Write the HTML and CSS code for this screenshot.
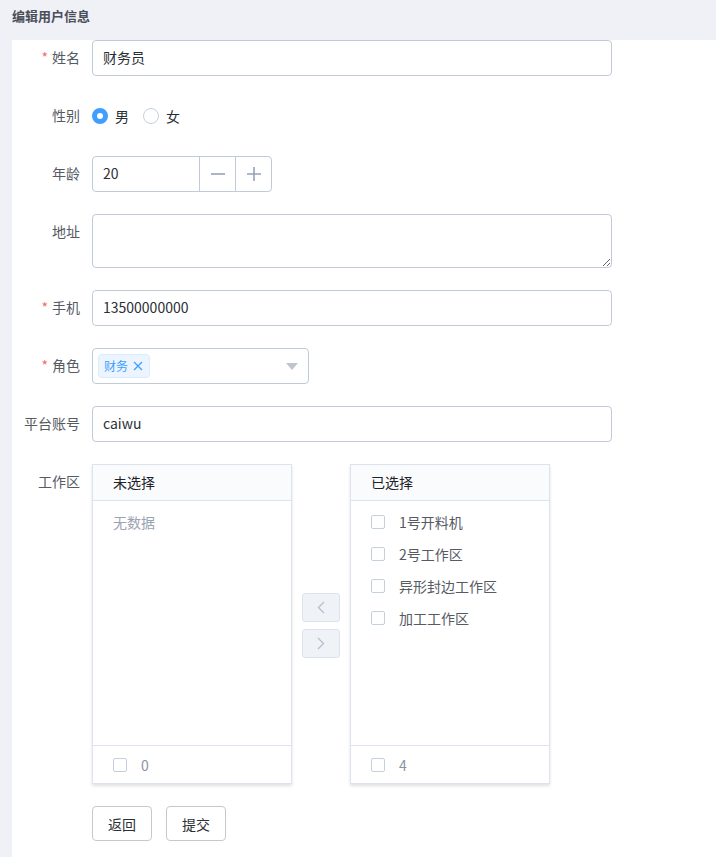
FILE: index.html
```html
<!DOCTYPE html>
<html lang="zh-CN">
<head>
<meta charset="utf-8">
<title>编辑用户信息</title>
<link rel="stylesheet" href="styles.css">
</head>
<body>
<div class="page">
  <div class="title">编辑用户信息</div>
  <div class="card">
    <form class="form">
      <div class="item">
        <label class="label req">姓名</label>
        <div class="ctrl"><div class="input">财务员</div></div>
      </div>
      <div class="item">
        <label class="label">性别</label>
        <div class="ctrl radios">
          <span class="radio on"><i class="dot"></i>男</span>
          <span class="radio"><i class="dot"></i>女</span>
        </div>
      </div>
      <div class="item">
        <label class="label">年龄</label>
        <div class="ctrl">
          <div class="number">
            <span class="num-val">20</span>
            <span class="num-btn"><svg width="14" height="14" viewBox="0 0 14 14"><path d="M0 7H14" stroke="#96a3ba" stroke-width="1.6"/></svg></span>
            <span class="num-btn"><svg width="14" height="14" viewBox="0 0 14 14"><path d="M0 7H14M7 0V14" stroke="#96a3ba" stroke-width="1.6"/></svg></span>
          </div>
        </div>
      </div>
      <div class="item">
        <label class="label">地址</label>
        <div class="ctrl"><textarea class="textarea"></textarea></div>
      </div>
      <div class="item">
        <label class="label req">手机</label>
        <div class="ctrl"><div class="input">13500000000</div></div>
      </div>
      <div class="item">
        <label class="label req">角色</label>
        <div class="ctrl">
          <div class="select">
            <span class="tag">财务<svg class="tag-x" width="10" height="10" viewBox="0 0 10 10"><path d="M1 1L9 9M9 1L1 9" stroke="#409eff" stroke-width="1.3"/></svg></span>
            <svg class="caret" width="12" height="7" viewBox="0 0 12 7"><path d="M0 0H12L6 7Z" fill="#c0c4cc"/></svg>
          </div>
        </div>
      </div>
      <div class="item">
        <label class="label">平台账号</label>
        <div class="ctrl"><div class="input">caiwu</div></div>
      </div>
      <div class="item">
        <label class="label">工作区</label>
        <div class="ctrl">
          <div class="transfer">
            <div class="panel">
              <div class="panel-head">未选择</div>
              <div class="panel-body"><div class="empty">无数据</div></div>
              <div class="panel-foot"><i class="cb"></i><span class="count">0</span></div>
            </div>
            <div class="t-btns">
              <span class="t-btn"><svg width="8" height="13" viewBox="0 0 8 13"><path d="M7 1L1.5 6.5L7 12" fill="none" stroke="#b4bfd0" stroke-width="1.3"/></svg></span>
              <span class="t-btn"><svg width="8" height="13" viewBox="0 0 8 13"><path d="M1 1L6.5 6.5L1 12" fill="none" stroke="#b4bfd0" stroke-width="1.3"/></svg></span>
            </div>
            <div class="panel">
              <div class="panel-head">已选择</div>
              <div class="panel-body">
                <div class="opt"><i class="cb"></i>1号开料机</div>
                <div class="opt"><i class="cb"></i>2号工作区</div>
                <div class="opt"><i class="cb"></i>异形封边工作区</div>
                <div class="opt"><i class="cb"></i>加工工作区</div>
              </div>
              <div class="panel-foot"><i class="cb"></i><span class="count">4</span></div>
            </div>
          </div>
        </div>
      </div>
      <div class="item">
        <span class="label"></span>
        <div class="ctrl actions">
          <button type="button" class="btn">返回</button>
          <button type="button" class="btn">提交</button>
        </div>
      </div>
    </form>
  </div>
</div>
</body>
</html>
```
FILE: styles.css
```css
* { box-sizing: border-box; }
html, body { margin: 0; padding: 0; }
body {
  width: 716px;
  height: 857px;
  overflow: hidden;
  background: #f0f1f6;
  font-family: "Noto Sans CJK SC", "Noto Sans", sans-serif;
  font-size: 14px;
  color: #333;
}
.page { display: flex; flex-direction: column; height: 857px; }
.title {
  height: 40px;
  padding: 6px 0 0 12px;
  font-size: 13px;
  font-weight: 700;
  color: #4a4f5a;
  line-height: 20px;
}
.card {
  flex: 1;
  margin-left: 12px;
  background: #fff;
}
.form { display: flex; flex-direction: column; gap: 22px; }
.item { display: flex; align-items: flex-start; }
.label {
  width: 80px;
  flex: none;
  padding-right: 12px;
  text-align: right;
  line-height: 34px;
  color: #555a63;
}
.label.req::before { content: "*"; color: #f56c6c; margin-right: 4px; }
.ctrl { flex: none; }
.input {
  width: 520px;
  height: 36px;
  border: 1px solid #c2cad8;
  border-radius: 4px;
  padding: 0 10px;
  line-height: 32px;
  color: #2b2f36;
}
.radios { display: flex; align-items: center; height: 36px; padding-bottom: 1px; }
.radio { display: flex; align-items: center; margin-right: 14px; color: #2b2f36; }
.radio .dot {
  width: 16px; height: 16px;
  border: 1px solid #c6cfdd;
  border-radius: 50%;
  margin-right: 7px;
  background: #fff;
}
.radio.on .dot { border: 5px solid #409eff; }
.number {
  display: flex;
  width: 180px;
  height: 36px;
  border: 1px solid #c2cad8;
  border-radius: 4px;
}
.num-val { flex: 1; padding-left: 10px; line-height: 32px; color: #2b2f36; }
.num-btn {
  width: 36px;
  border-left: 1px solid #c2cad8;
  display: flex; align-items: center; justify-content: center;
}
.textarea {
  display: block;
  width: 520px;
  height: 54px;
  border: 1px solid #c2cad8;
  border-radius: 4px;
  resize: vertical;
  font: inherit;
  margin: 0;
}
.select {
  width: 217px;
  height: 36px;
  border: 1px solid #c2cad8;
  border-radius: 4px;
  display: flex;
  align-items: center;
  padding: 0 10px 0 5px;
}
.tag {
  display: flex; align-items: center;
  height: 24px;
  padding: 0 6px 1px 5px;
  background: #ecf5ff;
  border: 1px solid #d9ecff;
  border-radius: 4px;
  color: #409eff;
  font-size: 12px;
}
.tag-x { margin-left: 5px; }
.caret { margin-left: auto; }
.transfer { display: flex; align-items: center; }
.panel {
  width: 200px;
  height: 320px;
  border: 1px solid #dde3ee;
  box-shadow: 0 2px 3px rgba(0,0,0,0.12);
  display: flex; flex-direction: column;
}
.panel-head {
  height: 36px;
  background: #fafbfd;
  border-bottom: 1px solid #dde3ee;
  padding-left: 20px;
  line-height: 34px;
  color: #1f2329;
}
.panel-body { flex: 1; padding-top: 5px; }
.empty { padding-left: 20px; line-height: 32px; color: #9aa3b1; }
.opt { display: flex; align-items: center; height: 32px; padding-left: 20px; color: #555a63; }
.cb {
  width: 14px; height: 14px;
  border: 1px solid #c6cfdd;
  border-radius: 2px;
  background: #fff;
  margin-right: 14px;
  flex: none;
}
.panel-foot {
  height: 38px;
  border-top: 1px solid #dde3ee;
  display: flex; align-items: center;
  padding-left: 20px;
  color: #8a93a3;
}
.t-btns {
  width: 58px;
  display: flex; flex-direction: column; align-items: center; gap: 7px;
  padding-top: 2px;
}
.t-btn {
  width: 38px; height: 29px;
  background: #eff2f7;
  border: 1px solid #dde3ee;
  border-radius: 3px;
  display: flex; align-items: center; justify-content: center;
}
.actions { display: flex; gap: 14px; }
.btn {
  width: 60px; height: 35px;
  background: #fff;
  border: 1px solid #c8c8c8;
  border-radius: 4px;
  font: inherit;
  color: #2b2f36;
  padding: 0;
}
```
